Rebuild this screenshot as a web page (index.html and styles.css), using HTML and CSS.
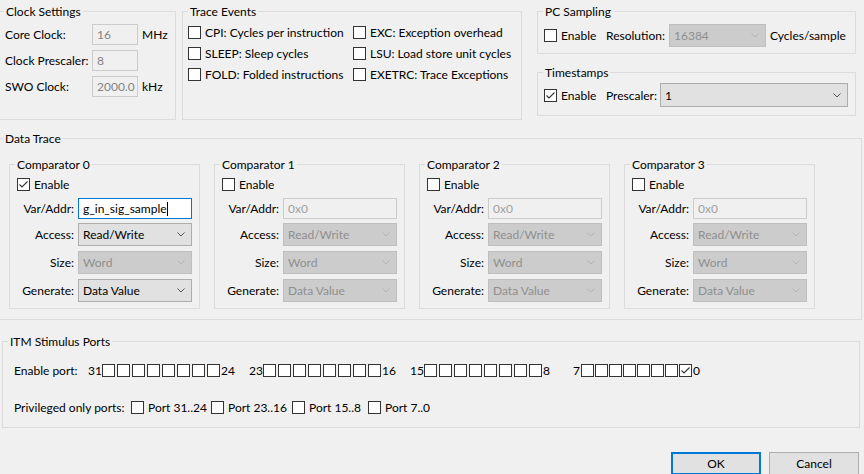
FILE: index.html
```html
<!DOCTYPE html>
<html>
<head>
<meta charset="utf-8">
<title>Trace</title>
<link rel="stylesheet" href="styles.css">
</head>
<body>
<div class="dlg">
  <div class="top">
    <fieldset class="grp clock">
      <legend>Clock Settings</legend>
      <div class="clock-body">
        <span class="lbl">Core Clock:</span><span class="edit dis">16</span><span class="unit">MHz</span>
        <span class="lbl">Clock Prescaler:</span><span class="edit dis">8</span><span></span>
        <span class="lbl">SWO Clock:</span><span class="edit dis">2000.0</span><span class="unit">kHz</span>
      </div>
    </fieldset>
    <fieldset class="grp events">
      <legend>Trace Events</legend>
      <div class="events-body">
        <label class="cb"><span class="box"></span>CPI: Cycles per instruction</label>
        <label class="cb"><span class="box"></span>EXC: Exception overhead</label>
        <label class="cb"><span class="box"></span>SLEEP: Sleep cycles</label>
        <label class="cb"><span class="box"></span>LSU: Load store unit cycles</label>
        <label class="cb"><span class="box"></span>FOLD: Folded instructions</label>
        <label class="cb"><span class="box"></span>EXETRC: Trace Exceptions</label>
      </div>
    </fieldset>
    <div class="rcol">
      <fieldset class="grp pcs">
        <legend>PC Sampling</legend>
        <div class="pcs-body">
          <label class="cb en"><span class="box"></span>Enable</label>
          <span class="res-lbl">Resolution:</span>
          <div class="combo dis res"><span>16384</span><svg width="8" height="5" viewBox="0 0 8 5"><polyline points="0.5,0.5 4,4 7.5,0.5" fill="none" stroke="#b4b4b4" stroke-width="1"/></svg></div>
          <span class="unit2">Cycles/sample</span>
        </div>
      </fieldset>
      <fieldset class="grp ts">
        <legend>Timestamps</legend>
        <div class="ts-body">
          <label class="cb en"><span class="box on"><svg width="11" height="11" viewBox="0 0 11 11"><polyline points="1.5,5.5 4,8 9.5,2.5" fill="none" stroke="#333" stroke-width="1.1"/></svg></span>Enable</label>
          <span class="pre-lbl">Prescaler:</span>
          <div class="combo pre"><span>1</span><svg width="8" height="5" viewBox="0 0 8 5"><polyline points="0.5,0.5 4,4 7.5,0.5" fill="none" stroke="#555" stroke-width="1"/></svg></div>
        </div>
      </fieldset>
    </div>
  </div>

  <fieldset class="grp data">
    <legend>Data Trace</legend>
    <div class="data-body">
      <fieldset class="grp comp">
        <legend>Comparator 0</legend>
        <div class="comp-body">
          <label class="cb"><span class="box on"><svg width="11" height="11" viewBox="0 0 11 11"><polyline points="1.5,5.5 4,8 9.5,2.5" fill="none" stroke="#333" stroke-width="1.1"/></svg></span>Enable</label>
          <div class="comp-grid">
            <span class="clbl">Var/Addr:</span><span class="edit focus">g_in_sig_sample<span class="caret"></span></span>
            <span class="clbl">Access:</span><div class="combo"><span>Read/Write</span><svg width="8" height="5" viewBox="0 0 8 5"><polyline points="0.5,0.5 4,4 7.5,0.5" fill="none" stroke="#555" stroke-width="1"/></svg></div>
            <span class="clbl">Size:</span><div class="combo dis"><span>Word</span><svg width="8" height="5" viewBox="0 0 8 5"><polyline points="0.5,0.5 4,4 7.5,0.5" fill="none" stroke="#b4b4b4" stroke-width="1"/></svg></div>
            <span class="clbl">Generate:</span><div class="combo"><span>Data Value</span><svg width="8" height="5" viewBox="0 0 8 5"><polyline points="0.5,0.5 4,4 7.5,0.5" fill="none" stroke="#555" stroke-width="1"/></svg></div>
          </div>
        </div>
      </fieldset>
      <fieldset class="grp comp">
        <legend>Comparator 1</legend>
        <div class="comp-body">
          <label class="cb"><span class="box"></span>Enable</label>
          <div class="comp-grid">
            <span class="clbl">Var/Addr:</span><span class="edit dis light">0x0</span>
            <span class="clbl">Access:</span><div class="combo dis"><span>Read/Write</span><svg width="8" height="5" viewBox="0 0 8 5"><polyline points="0.5,0.5 4,4 7.5,0.5" fill="none" stroke="#b4b4b4" stroke-width="1"/></svg></div>
            <span class="clbl">Size:</span><div class="combo dis"><span>Word</span><svg width="8" height="5" viewBox="0 0 8 5"><polyline points="0.5,0.5 4,4 7.5,0.5" fill="none" stroke="#b4b4b4" stroke-width="1"/></svg></div>
            <span class="clbl">Generate:</span><div class="combo dis"><span>Data Value</span><svg width="8" height="5" viewBox="0 0 8 5"><polyline points="0.5,0.5 4,4 7.5,0.5" fill="none" stroke="#b4b4b4" stroke-width="1"/></svg></div>
          </div>
        </div>
      </fieldset>
      <fieldset class="grp comp">
        <legend>Comparator 2</legend>
        <div class="comp-body">
          <label class="cb"><span class="box"></span>Enable</label>
          <div class="comp-grid">
            <span class="clbl">Var/Addr:</span><span class="edit dis light">0x0</span>
            <span class="clbl">Access:</span><div class="combo dis"><span>Read/Write</span><svg width="8" height="5" viewBox="0 0 8 5"><polyline points="0.5,0.5 4,4 7.5,0.5" fill="none" stroke="#b4b4b4" stroke-width="1"/></svg></div>
            <span class="clbl">Size:</span><div class="combo dis"><span>Word</span><svg width="8" height="5" viewBox="0 0 8 5"><polyline points="0.5,0.5 4,4 7.5,0.5" fill="none" stroke="#b4b4b4" stroke-width="1"/></svg></div>
            <span class="clbl">Generate:</span><div class="combo dis"><span>Data Value</span><svg width="8" height="5" viewBox="0 0 8 5"><polyline points="0.5,0.5 4,4 7.5,0.5" fill="none" stroke="#b4b4b4" stroke-width="1"/></svg></div>
          </div>
        </div>
      </fieldset>
      <fieldset class="grp comp">
        <legend>Comparator 3</legend>
        <div class="comp-body">
          <label class="cb"><span class="box"></span>Enable</label>
          <div class="comp-grid">
            <span class="clbl">Var/Addr:</span><span class="edit dis light">0x0</span>
            <span class="clbl">Access:</span><div class="combo dis"><span>Read/Write</span><svg width="8" height="5" viewBox="0 0 8 5"><polyline points="0.5,0.5 4,4 7.5,0.5" fill="none" stroke="#b4b4b4" stroke-width="1"/></svg></div>
            <span class="clbl">Size:</span><div class="combo dis"><span>Word</span><svg width="8" height="5" viewBox="0 0 8 5"><polyline points="0.5,0.5 4,4 7.5,0.5" fill="none" stroke="#b4b4b4" stroke-width="1"/></svg></div>
            <span class="clbl">Generate:</span><div class="combo dis"><span>Data Value</span><svg width="8" height="5" viewBox="0 0 8 5"><polyline points="0.5,0.5 4,4 7.5,0.5" fill="none" stroke="#b4b4b4" stroke-width="1"/></svg></div>
          </div>
        </div>
      </fieldset>
    </div>
  </fieldset>

  <fieldset class="grp itm">
    <legend>ITM Stimulus Ports</legend>
    <div class="itm-body">
      <div class="port-row">
        <span class="port-lbl">Enable port:</span>
        <div class="pg g1"><span class="num">31</span><span class="boxes"><span class="box"></span><span class="box"></span><span class="box"></span><span class="box"></span><span class="box"></span><span class="box"></span><span class="box"></span><span class="box"></span></span><span class="num">24</span></div>
        <div class="pg g2"><span class="num">23</span><span class="boxes"><span class="box"></span><span class="box"></span><span class="box"></span><span class="box"></span><span class="box"></span><span class="box"></span><span class="box"></span><span class="box"></span></span><span class="num">16</span></div>
        <div class="pg g3"><span class="num">15</span><span class="boxes"><span class="box"></span><span class="box"></span><span class="box"></span><span class="box"></span><span class="box"></span><span class="box"></span><span class="box"></span><span class="box"></span></span><span class="num">8</span></div>
        <div class="pg g4"><span class="num">7</span><span class="boxes tight"><span class="box"></span><span class="box"></span><span class="box"></span><span class="box"></span><span class="box"></span><span class="box"></span><span class="box"></span><span class="box on"><svg width="11" height="11" viewBox="0 0 11 11"><polyline points="1.5,5.5 4,8 9.5,2.5" fill="none" stroke="#333" stroke-width="1.1"/></svg></span></span><span class="num">0</span></div>
      </div>
      <div class="priv-row">
        <span class="priv-lbl">Privileged only ports:</span>
        <label class="cb p1"><span class="box"></span>Port 31..24</label>
        <label class="cb p2"><span class="box"></span>Port 23..16</label>
        <label class="cb p3"><span class="box"></span>Port 15..8</label>
        <label class="cb p4"><span class="box"></span>Port 7..0</label>
      </div>
    </div>
  </fieldset>

  <div class="btns">
    <button class="btn default">OK</button>
    <button class="btn">Cancel</button>
  </div>
</div>
</body>
</html>
```

FILE: styles.css
```css
* { box-sizing: border-box; }
html, body { margin: 0; padding: 0; }
body {
  background: #f0f0f0;
  width: 864px;
  height: 474px;
  overflow: hidden;
  font-family: Lato, "Noto Sans", sans-serif;
  font-size: 12px;
  color: #000;
}
.dlg { padding-top: 4px; }

/* group boxes */
.grp {
  margin: 0;
  padding: 0;
  border: 1px solid #dcdcdc;
  min-width: 0;
}
.grp > legend {
  padding: 0 2px;
  margin-left: 5px;
  height: 15px;
  line-height: 15px;
  white-space: nowrap;
}

/* checkboxes */
.cb {
  display: flex;
  align-items: center;
  height: 13px;
  line-height: 13px;
  white-space: nowrap;
}
.box {
  width: 13px;
  height: 13px;
  border: 1px solid #333;
  background: #fff;
  flex: none;
  display: block;
}
.box svg { display: block; }
.cb .box { margin-right: 4px; }

/* edits and combos */
.edit {
  display: block;
  height: 21px;
  line-height: 19px;
  padding-left: 4px;
  border: 1px solid #7a7a7a;
  background: #fff;
  white-space: nowrap;
  overflow: hidden;
}
.edit.dis { border-color: #cccccc; background: #f0f0f0; color: #838383; }
.edit.dis.light { color: #a0a0a0; }
.edit.focus { border-color: #0078d7; background: #fff; color: #000; }
.caret {
  display: inline-block;
  width: 1px;
  height: 14px;
  background: #000;
  vertical-align: -3px;
}
.combo {
  display: flex;
  align-items: center;
  justify-content: space-between;
  height: 23px;
  padding: 0 6px 0 4px;
  border: 1px solid #adadad;
  background: #e1e1e1;
  white-space: nowrap;
}
.combo svg { display: block; flex: none; }
.combo.dis { border-color: #bfbfbf; background: #cccccc; color: #8f8f8f; }

/* top row */
.top {
  display: flex;
  height: 116px;
  margin-left: -2px;
}
.clock { width: 178px; }
.events { width: 340px; margin-left: 6px; }
.rcol {
  width: 319px;
  margin-left: 15px;
  display: flex;
  flex-direction: column;
}
.pcs { height: 50px; }
.ts { height: 51px; margin-top: 11px; }

.clock-body {
  padding: 5px 0 0 6px;
  display: grid;
  grid-template-columns: 87px 46px auto;
  grid-auto-rows: 21px;
  row-gap: 5px;
  align-items: center;
}
.unit { margin-left: 4px; }

.events-body {
  padding: 7px 0 0 5px;
  display: grid;
  grid-template-columns: 165px auto;
  row-gap: 8px;
}

.pcs-body, .ts-body {
  display: flex;
  align-items: center;
  padding-left: 6px;
}
.pcs-body { padding-top: 5px; height: 28px; }
.ts-body { padding-top: 3px; height: 27px; }
.cb.en { width: 62px; }
.res-lbl { width: 63px; }
.combo.res { width: 97px; height: 23px; }
.unit2 { margin-left: 4px; }
.pre-lbl { width: 54px; }
.combo.pre { width: 188px; height: 24px; }

/* data trace */
.data { margin: 11px 0 0 -3px; width: 865px; }
.data-body {
  display: flex;
  gap: 14px;
  padding: 11px 0 10px 11px;
}
.comp { width: 191px; }
.comp-body { padding: 6px 0 6px 0; }
.comp-body > .cb { margin-left: 7px; }
.comp-grid {
  margin-top: 7px;
  padding-left: 4px;
  display: grid;
  grid-template-columns: 60px 114px;
  grid-template-rows: 20px 23px 23px 23px;
  column-gap: 4px;
  row-gap: 5px;
  align-items: start;
}
.clbl { text-align: right; white-space: nowrap; line-height: 21px; }
.comp-grid .combo ~ .clbl, .comp-grid .clbl:not(:first-child) { line-height: 23px; }

/* ITM */
.itm { margin: 14px 0 0 2px; width: 858px; }
.itm-body { padding: 15px 0 13px 11px; }
.port-row, .priv-row {
  display: flex;
  align-items: center;
  height: 13px;
  line-height: 13px;
  white-space: nowrap;
}
.priv-row { margin-top: 24px; }
.port-lbl { width: 74px; }
.pg { display: flex; align-items: center; }
.g1 { width: 161px; }
.g2 { width: 161px; }
.g3 { width: 163px; }
.boxes { display: flex; gap: 2px; margin: 0 1px 0 0; }
.boxes.tight { gap: 1px; margin-left: 1px; }
.priv-lbl { width: 117px; }
.p1 { width: 80px; }
.p2 { width: 81px; }
.p3 { width: 76px; }

/* buttons */
.btns {
  display: flex;
  justify-content: flex-end;
  gap: 8px;
  margin-top: 24px;
  padding-right: 5px;
}
.btn {
  width: 90px;
  height: 23px;
  margin: 0;
  padding: 0;
  border: 1px solid #adadad;
  background: #e1e1e1;
  font-family: inherit;
  font-size: 12px;
  color: #000;
}
.btn.default { border: 2px solid #0078d7; }
```
